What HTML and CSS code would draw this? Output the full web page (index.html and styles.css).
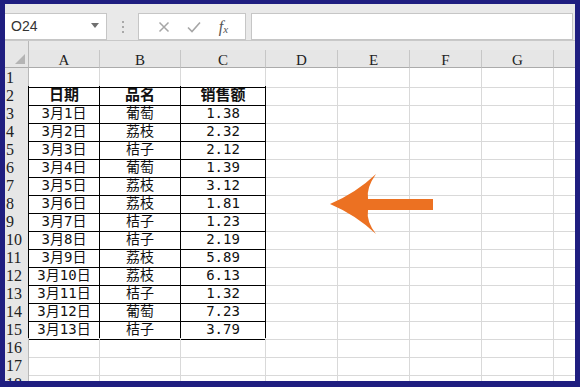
FILE: index.html
```html
<!DOCTYPE html>
<html lang="zh-CN">
<head>
  <meta charset="UTF-8">
  <title>销售额</title>
  <link rel="stylesheet" href="styles.css">
</head>
<body>
  <div class="frame">
    <div class="window">

      <!-- Name box + formula bar -->
      <div class="toolbar">
        <div class="name-box">
          <span>O24</span>
          <svg class="drop" width="8" height="5" viewBox="0 0 8 5"><path d="M0 0H8L4 5Z" fill="#6f6f6f"/></svg>
        </div>
        <div class="sep"><i></i><i></i><i></i></div>
        <div class="fx-box">
          <svg width="12" height="12" viewBox="0 0 12 12"><path d="M1.5 1.5L10.5 10.5M10.5 1.5L1.5 10.5" stroke="#a6a6a6" stroke-width="1.5" fill="none"/></svg>
          <svg width="14" height="12" viewBox="0 0 14 12"><path d="M1 6.5L5 10.5L13 1.5" stroke="#a6a6a6" stroke-width="1.6" fill="none"/></svg>
          <span class="fx">f<sub>x</sub></span>
        </div>
        <div class="formula"></div>
      </div>

      <!-- Sheet -->
      <div class="sheet">
        <div class="row head">
          <div class="corner"><span></span></div>
          <div class="ch">A</div><div class="ch">B</div><div class="ch">C</div><div class="ch">D</div>
          <div class="ch">E</div><div class="ch">F</div><div class="ch">G</div><div class="ch"></div>
        </div>

        <div class="row"><div class="rh">1</div><div class="c tb"></div><div class="c tb"></div><div class="c tb"></div><div class="c"></div><div class="c"></div><div class="c"></div><div class="c"></div><div class="c"></div></div>
        <div class="row"><div class="rh t">2</div><div class="c t bold">日期</div><div class="c t bold">品名</div><div class="c t bold">销售额</div><div class="c"></div><div class="c"></div><div class="c"></div><div class="c"></div><div class="c"></div></div>
        <div class="row"><div class="rh t">3</div><div class="c t">3月1日</div><div class="c t">葡萄</div><div class="c t">1.38</div><div class="c"></div><div class="c"></div><div class="c"></div><div class="c"></div><div class="c"></div></div>
        <div class="row"><div class="rh t">4</div><div class="c t">3月2日</div><div class="c t">荔枝</div><div class="c t">2.32</div><div class="c"></div><div class="c"></div><div class="c"></div><div class="c"></div><div class="c"></div></div>
        <div class="row"><div class="rh t">5</div><div class="c t">3月3日</div><div class="c t">桔子</div><div class="c t">2.12</div><div class="c"></div><div class="c"></div><div class="c"></div><div class="c"></div><div class="c"></div></div>
        <div class="row"><div class="rh t">6</div><div class="c t">3月4日</div><div class="c t">葡萄</div><div class="c t">1.39</div><div class="c"></div><div class="c"></div><div class="c"></div><div class="c"></div><div class="c"></div></div>
        <div class="row"><div class="rh t">7</div><div class="c t">3月5日</div><div class="c t">荔枝</div><div class="c t">3.12</div><div class="c"></div><div class="c"></div><div class="c"></div><div class="c"></div><div class="c"></div></div>
        <div class="row"><div class="rh t">8</div><div class="c t">3月6日</div><div class="c t">荔枝</div><div class="c t">1.81</div><div class="c"></div><div class="c"></div><div class="c"></div><div class="c"></div><div class="c"></div></div>
        <div class="row"><div class="rh t">9</div><div class="c t">3月7日</div><div class="c t">桔子</div><div class="c t">1.23</div><div class="c"></div><div class="c"></div><div class="c"></div><div class="c"></div><div class="c"></div></div>
        <div class="row"><div class="rh t">10</div><div class="c t">3月8日</div><div class="c t">桔子</div><div class="c t">2.19</div><div class="c"></div><div class="c"></div><div class="c"></div><div class="c"></div><div class="c"></div></div>
        <div class="row"><div class="rh t">11</div><div class="c t">3月9日</div><div class="c t">荔枝</div><div class="c t">5.89</div><div class="c"></div><div class="c"></div><div class="c"></div><div class="c"></div><div class="c"></div></div>
        <div class="row"><div class="rh t">12</div><div class="c t">3月10日</div><div class="c t">荔枝</div><div class="c t">6.13</div><div class="c"></div><div class="c"></div><div class="c"></div><div class="c"></div><div class="c"></div></div>
        <div class="row"><div class="rh t">13</div><div class="c t">3月11日</div><div class="c t">桔子</div><div class="c t">1.32</div><div class="c"></div><div class="c"></div><div class="c"></div><div class="c"></div><div class="c"></div></div>
        <div class="row"><div class="rh t">14</div><div class="c t">3月12日</div><div class="c t">葡萄</div><div class="c t">7.23</div><div class="c"></div><div class="c"></div><div class="c"></div><div class="c"></div><div class="c"></div></div>
        <div class="row"><div class="rh t">15</div><div class="c t">3月13日</div><div class="c t">桔子</div><div class="c t">3.79</div><div class="c"></div><div class="c"></div><div class="c"></div><div class="c"></div><div class="c"></div></div>
        <div class="row"><div class="rh">16</div><div class="c"></div><div class="c"></div><div class="c"></div><div class="c"></div><div class="c"></div><div class="c"></div><div class="c"></div><div class="c"></div></div>
        <div class="row"><div class="rh">17</div><div class="c"></div><div class="c"></div><div class="c"></div><div class="c"></div><div class="c"></div><div class="c"></div><div class="c"></div><div class="c"></div></div>
        <div class="row"><div class="rh">18</div><div class="c"></div><div class="c"></div><div class="c"></div><div class="c"></div><div class="c"></div><div class="c"></div><div class="c"></div><div class="c"></div></div>
      </div>

      <!-- Annotation arrow over the sheet -->
      <svg class="arrow" width="115" height="70" viewBox="325 170 115 70">
        <path d="M330 204 Q356 193 376 174 Q366 188 368 199 L433 199 L433 210 L368 210 Q366 221 376 234 Q356 215 330 204 Z" fill="#ec7122"/>
      </svg>
    </div>
  </div>
</body>
</html>
```

FILE: styles.css
```css
/* Basic styling */
body, html {
  margin: 0;
  padding: 0;
  background-color: #1f1e80;
}

/* Blue frame round the screenshot */
.frame {
  width: 580px;
  height: 387px;
  box-sizing: border-box;
  padding: 4px 5px 6px 5px;
  background-color: #1f1e80;
}
.window {
  position: relative;
  height: 100%;
  background-color: #fff;
  overflow: hidden;
}

/* Toolbar */
.toolbar {
  display: flex;
  height: 37px;
  box-sizing: border-box;
  padding-top: 9px;
  background-color: #e9e9e9;
  border-bottom: 1px solid #c9c9c9;
}
.name-box {
  display: flex;
  align-items: center;
  justify-content: space-between;
  width: 102px;
  height: 27px;
  box-sizing: border-box;
  padding: 0 7px 1px 6px;
  background-color: #fff;
  border: 1px solid #c6c6c6;
  border-left: none;
  font-family: "Liberation Sans", Arial, sans-serif;
  font-size: 14px;
  color: #333;
}
.name-box .drop {
  margin-top: -1px;
}
.sep {
  width: 31px;
  display: flex;
  flex-direction: column;
  align-items: center;
  justify-content: center;
  gap: 3px;
  height: 27px;
}
.sep i {
  display: block;
  width: 2px;
  height: 2px;
  background-color: #a9a9a9;
}
.fx-box {
  display: flex;
  align-items: center;
  justify-content: space-around;
  width: 108px;
  height: 27px;
  box-sizing: border-box;
  padding: 0 8px 0 10px;
  background-color: #fff;
  border: 1px solid #c6c6c6;
}
.fx {
  font-family: "Liberation Serif", serif;
  font-style: italic;
  font-size: 16px;
  color: #555;
}
.fx sub {
  font-size: 11px;
  vertical-align: -1px;
}
.formula {
  flex: 1;
  height: 27px;
  box-sizing: border-box;
  margin: 0 2px 0 5px;
  background-color: #fff;
  border: 1px solid #c6c6c6;
}

/* Sheet grid */
.row {
  display: grid;
  grid-template-columns: 24px 71px 81px 85px 72px 72px 72px 72px 1fr;
  height: 18px;
}
.row.head {
  height: 27px;
  background-color: #e9e9e9;
  align-items: end;
}
.corner {
  position: relative;
  height: 27px;
  box-sizing: border-box;
  background-color: #e6e6e6;
  border-right: 1px solid #b8b8b8;
  border-bottom: 1px solid #ababab;
}
.corner span {
  position: absolute;
  right: 3px;
  bottom: 3px;
  width: 0;
  height: 0;
  border-left: 10px solid transparent;
  border-bottom: 10px solid #b4b4b4;
}
.ch {
  height: 18px;
  box-sizing: border-box;
  padding-top: 1px;
  background-color: #e6e6e6;
  border-right: 1px solid #c6c6c6;
  border-bottom: 1px solid #ababab;
  text-align: center;
  font-family: "Liberation Serif", serif;
  font-size: 15px;
  line-height: 18px;
  color: #222;
}
.ch:last-child {
  border-right: none;
}
.rh {
  box-sizing: border-box;
  padding: 1px 0 0 1px;
  background-color: #e6e6e6;
  border-right: 1px solid #b8b8b8;
  border-bottom: 1px solid #d4d4d4;
  font-family: "Liberation Serif", serif;
  font-size: 16px;
  line-height: 18px;
  color: #222;
}
.c {
  box-sizing: border-box;
  border-right: 1px solid #d9d9d9;
  border-bottom: 1px solid #d9d9d9;
  text-align: center;
  font-family: "DejaVu Sans Mono", "Noto Sans CJK SC", monospace;
  font-size: 14px;
  line-height: 18px;
  color: #111;
  white-space: nowrap;
}
.c:last-child {
  border-right: none;
}

/* Bordered table A2:C15 */
.c.t {
  border-right-color: #000;
  border-bottom-color: #000;
}
.c.tb {
  border-bottom-color: #000;
}
.rh.t {
  border-right-color: #000;
}
.bold {
  font-weight: bold;
  font-size: 15px;
}

/* Arrow */
.arrow {
  position: absolute;
  left: 320px;
  top: 166px;
}
```
